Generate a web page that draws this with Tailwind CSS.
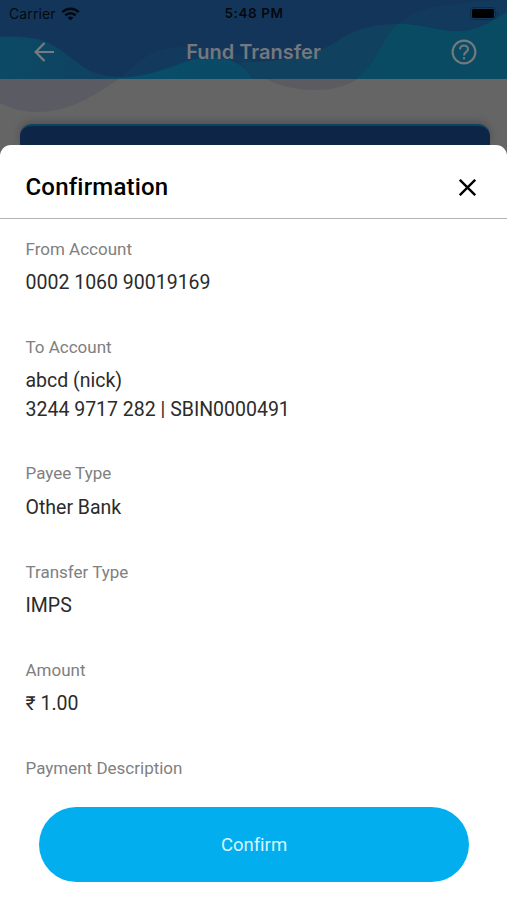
<!DOCTYPE html>
<html lang="en">
<head>
  <meta charset="UTF-8" />
  <meta name="viewport" content="width=device-width, initial-scale=1.0"/>
  <title>Fund Transfer</title>
  <script src="https://cdn.jsdelivr.net/npm/@tailwindcss/browser@4"></script>
</head>
<body class="bg-[#656565] font-['Roboto',sans-serif]">
  <div class="relative flex flex-col w-[507px] h-[900px] overflow-hidden">
    <!-- Wave background -->
    <svg class="absolute top-0 left-0" width="507" height="145" viewBox="0 0 507 145" fill="none">
      <defs>
        <linearGradient id="mid" x1="130" y1="0" x2="250" y2="0" gradientUnits="userSpaceOnUse">
          <stop offset="0" stop-color="#084e6a"/>
          <stop offset="1" stop-color="#0a4a66"/>
        </linearGradient>
        <linearGradient id="left" x1="0" y1="0" x2="110" y2="0" gradientUnits="userSpaceOnUse">
          <stop offset="0" stop-color="#0b4a66"/>
          <stop offset="1" stop-color="#10415f"/>
        </linearGradient>
      </defs>
      <path d="M0 79H119C93 97 67 112 38 112C22 112 10 108 0 103Z" fill="#5b5b64"/>
      <path d="M266 79H358C344 87 331 90 314 90C296 90 280 86 266 79Z" fill="#5c5b62"/>
      <path d="M0 0H507V79H0Z" fill="#14355a"/>
      <path d="M0 37C20 36 38 37 52 45C76 57 82 77 122 77V79H0Z" fill="url(#left)"/>
      <path d="M122 77C138 60 155 47 182 47C215 47 240 54 253 60V79H122Z" fill="#123a5c"/>
      <path d="M95 79C145 79 165 69 188 61C215 54 241 58 253 79Z" fill="url(#mid)"/>
      <path d="M240 62C300 62 325 50 342 38C356 29 372 25 395 24C425 23 435 31 460 31C480 30 492 20 507 12V79H253Z" fill="#10425f"/>
      <path d="M355 79C378 64 379 42 398 24C425 23 435 31 460 31C480 30 492 20 507 12V79Z" fill="#084b63"/>
      <path d="M398 24C415 9 435 6 458 4C474 2 488 0 507 0V12C492 20 480 30 460 31C435 31 425 23 398 24Z" fill="#113a5c"/>
    </svg>

    <!-- Status bar -->
    <div class="relative grid grid-cols-3 items-center h-7 pl-[9px] pr-[8px] text-black/85 font-['Inter',sans-serif]">
      <div class="flex items-center gap-[5px]">
        <span class="text-[14px] leading-none tracking-[0.1px]">Carrier</span>
        <svg class="-mt-px" width="19" height="14" viewBox="0 0 19 14" fill="none" stroke="#030910" stroke-width="2.5">
          <path d="M1.2 5.2C6 .6 13 .6 17.8 5.2"/>
          <path d="M4.3 8.4C7.3 5.5 11.7 5.5 14.7 8.4"/>
          <path d="M9.5 13.5L6.6 10.5C8.3 9 10.7 9 12.4 10.5Z" fill="#030910" stroke="none"/>
        </svg>
      </div>
      <div class="text-center text-[13.5px] leading-none font-semibold tracking-[0.55px] whitespace-nowrap">5:48 PM</div>
      <svg class="justify-self-end -mt-[2px]" width="29" height="13" viewBox="0 0 29 13">
        <rect x=".5" y=".5" width="25" height="12" rx="3" fill="none" stroke="#0f2b4a"/>
        <rect x="2" y="2" width="22" height="9" rx="1.5" fill="#000"/>
        <path d="M27 4.5C28.5 5 28.5 8 27 8.5Z" fill="#0f2b4a"/>
      </svg>
    </div>

    <!-- App header -->
    <header class="relative flex items-center justify-between h-[51px] pl-[34px] pr-[30px] pb-[3px]">
      <svg width="20" height="20" viewBox="0 0 20 20" fill="none" stroke="#777b80" stroke-width="2.2">
        <path d="M20 10H2M10.5 1L1.6 10L10.5 19"/>
      </svg>
      <h1 class="text-[20px] font-semibold text-[#73787e] font-['Inter',sans-serif] pl-[2px]">Fund Transfer</h1>
      <svg width="26" height="26" viewBox="0 0 26 26" fill="none" stroke="#74797c" stroke-width="2.1">
        <circle cx="13" cy="13" r="11.4"/>
        <path d="M9 10.5C9 8.1 10.8 6.5 13 6.5S17 8.1 17 10.3C17 13 13 13.4 13 16.4"/>
        <path d="M13 18.1V20.3"/>
      </svg>
    </header>

    <!-- Account card behind the sheet -->
    <div class="relative mt-[45px] ml-[20px] mr-[17px] h-[21px] shrink-0 rounded-t-[12px] bg-[#0d2647] border-t-2 border-[#0b4461] shadow-[0_-2px_7px_rgba(40,40,55,0.35)]"></div>

    <!-- Bottom sheet -->
    <section class="relative flex flex-1 flex-col bg-white rounded-t-[11px]">
      <div class="flex items-center justify-between h-[74px] shrink-0 pl-[25.5px] pr-[31px] pt-[10px] border-b border-[#b5b5b5]">
        <h2 class="text-[24px] font-medium text-black tracking-[0.18px] [font-variant-ligatures:none]">Confirmation</h2>
        <svg class="mt-[2px]" width="17" height="17" viewBox="0 0 17 17" stroke="#000" stroke-width="2.4">
          <path d="M.8 .8L16.2 16.2M16.2 .8L.8 16.2"/>
        </svg>
      </div>

      <dl class="flex flex-col gap-[37.3px] pt-[17.5px] pl-[25.5px] h-[588px] shrink-0 text-[19.5px] leading-[28.5px] text-[#2b2b2b]">
        <div>
          <dt class="text-[17px] leading-6 text-[#808080] mb-[8.4px]">From Account</dt>
          <dd>0002 1060 90019169</dd>
        </div>
        <div>
          <dt class="text-[17px] leading-6 text-[#808080] mb-[8.4px]">To Account</dt>
          <dd>abcd (nick)</dd>
          <dd>3244 9717 282 | SBIN0000491</dd>
        </div>
        <div>
          <dt class="text-[17px] leading-6 text-[#808080] mb-[8.4px]">Payee Type</dt>
          <dd>Other Bank</dd>
        </div>
        <div>
          <dt class="text-[17px] leading-6 text-[#808080] mb-[8.4px]">Transfer Type</dt>
          <dd>IMPS</dd>
        </div>
        <div>
          <dt class="text-[17px] leading-6 text-[#808080] mb-[8.4px]">Amount</dt>
          <dd>₹ 1.00</dd>
        </div>
        <div>
          <dt class="text-[17px] leading-6 text-[#808080]">Payment Description</dt>
        </div>
      </dl>

      <button class="mx-[39px] w-[430px] h-[75px] pt-[2px] shrink-0 rounded-full bg-[#03aeef] text-[#d9f5ff] text-[18.5px] [font-variant-ligatures:none]">Confirm</button>
    </section>
  </div>
</body>
</html>
